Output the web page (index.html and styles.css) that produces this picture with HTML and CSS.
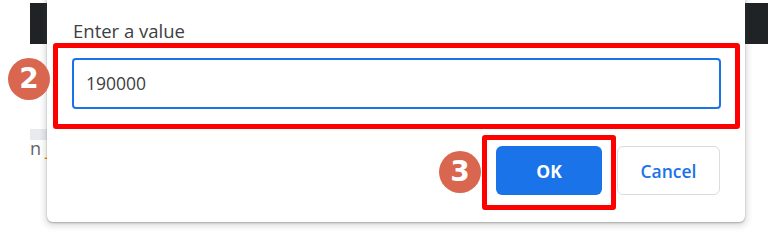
FILE: index.html
```html
<!DOCTYPE html>
<html>
<head>
<meta charset="utf-8">
<link rel="stylesheet" href="styles.css">
</head>
<body>
<div class="page">
  <div class="header"></div>
  <div class="behind">
    <div class="chip"></div>
    <div class="snippet"><span class="n">n</span> <span class="j">j</span></div>
  </div>
  <div class="dialog">
    <div class="label">Enter a value</div>
    <div class="input">190000</div>
    <div class="actions">
      <button class="btn ok">OK</button>
      <button class="btn cancel">Cancel</button>
    </div>
  </div>
  <div class="mark mark-input"></div>
  <div class="mark mark-ok"></div>
  <div class="step step-2">2</div>
  <div class="step step-3">3</div>
</div>
</body>
</html>
```
FILE: styles.css
```css
html, body {
  margin: 0;
  padding: 0;
  background: #ffffff;
}
.page {
  position: relative;
  width: 768px;
  height: 244px;
  overflow: hidden;
  background: #ffffff;
  font-family: "Open Sans", "Noto Sans", "Liberation Sans", sans-serif;
}
.header {
  margin-top: 3px;
  margin-left: 30px;
  height: 41px;
  background: #202326;
}
.behind {
  padding-left: 30px;
  padding-top: 85px;
}
.chip {
  width: 17px;
  height: 11px;
  background: #e8eaed;
}
.snippet {
  font-size: 18px;
  line-height: 16px;
  color: #5f6368;
}
.snippet .j {
  color: #e37400;
}
.dialog {
  position: absolute;
  left: 47px;
  top: -10px;
  width: 698px;
  height: 232px;
  box-sizing: border-box;
  padding: 28px 24px 0 25px;
  background: #ffffff;
  border-radius: 6px;
  box-shadow: 0 1px 2px rgba(60,64,67,.35), 0 2px 6px 2px rgba(60,64,67,.18);
  display: flex;
  flex-direction: column;
}
.label {
  font-size: 18.5px;
  line-height: 25px;
  color: #3c4043;
  padding-left: 1px;
}
.input {
  margin-top: 15px;
  height: 51px;
  width: 649px;
  box-sizing: border-box;
  border: 2px solid #1a73e8;
  border-radius: 4px;
  padding-left: 12px;
  font-size: 17.5px;
  line-height: 47px;
  color: #3c4043;
}
.actions {
  margin-top: 37px;
  display: flex;
  justify-content: flex-end;
  gap: 15px;
  padding-right: 1px;
}
.btn {
  height: 49px;
  border-radius: 6px;
  font-family: "Open Sans", "Noto Sans", sans-serif;
  font-size: 17.5px;
  padding: 0;
  cursor: pointer;
}
.ok {
  width: 106px;
  background: #1a73e8;
  border: none;
  color: #ffffff;
  font-weight: 700;
}
.cancel {
  width: 103px;
  background: #ffffff;
  border: 1px solid #dadce0;
  color: #1a73e8;
  font-weight: 600;
}
.mark {
  position: absolute;
  box-sizing: border-box;
  border: 5px solid #ff0000;
  border-radius: 3px;
}
.mark-input {
  left: 53px;
  top: 43px;
  width: 687px;
  height: 86px;
}
.mark-ok {
  left: 482px;
  top: 135px;
  width: 134px;
  height: 75px;
}
.step {
  position: absolute;
  width: 42px;
  height: 42px;
  border-radius: 50%;
  background: #d9664f;
  color: #ffffff;
  font-family: "DejaVu Sans", sans-serif;
  font-weight: 700;
  font-size: 28px;
  line-height: 42px;
  text-align: center;
}
.step-2 {
  left: 8px;
  top: 58px;
}
.step-3 {
  left: 439px;
  top: 151px;
}
```
